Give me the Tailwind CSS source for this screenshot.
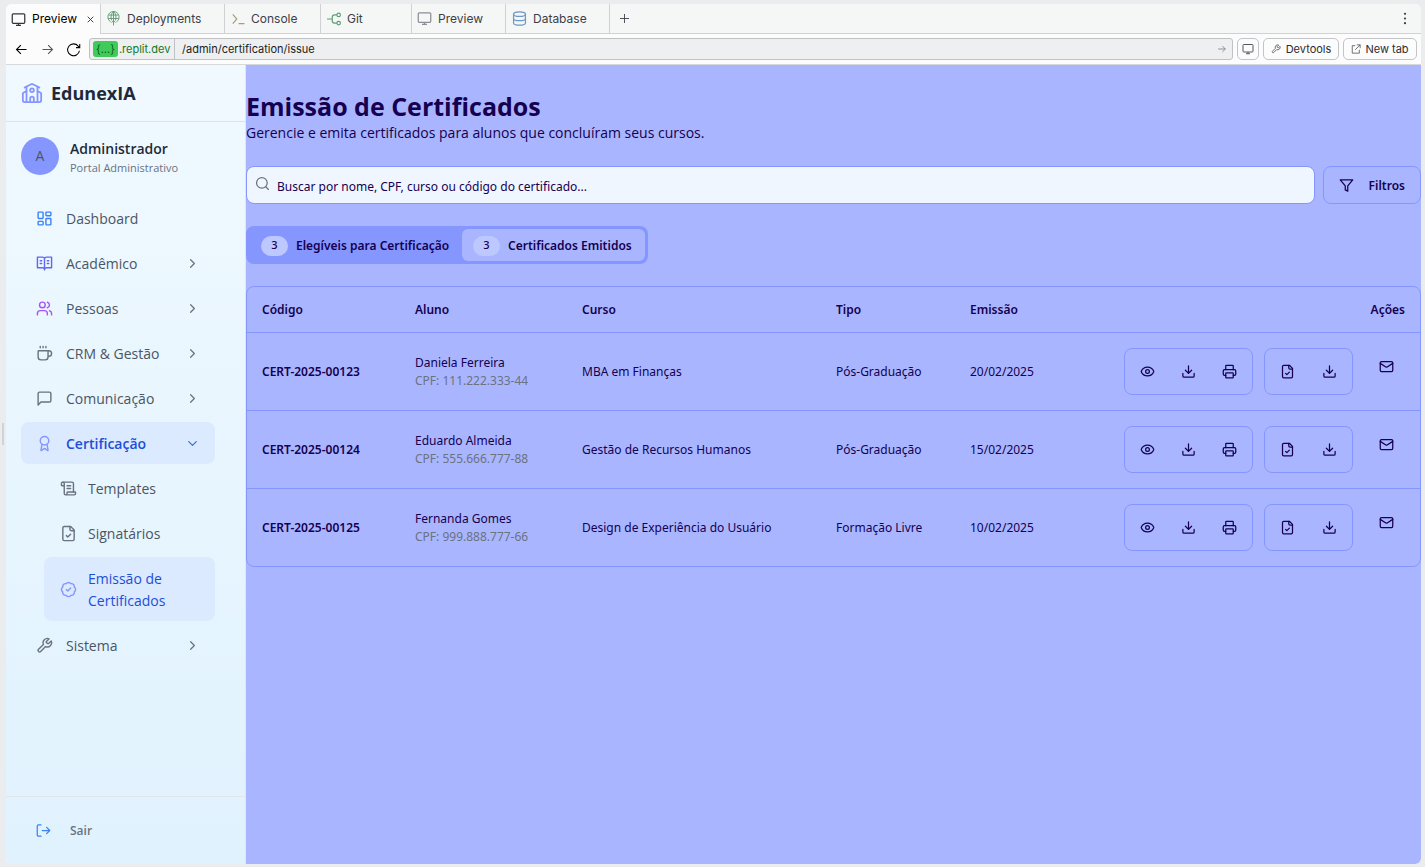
<!DOCTYPE html>
<html lang="pt-BR">
<head>
<meta charset="utf-8">
<title>EdunexIA - Emissão de Certificados</title>
<script src="https://cdn.jsdelivr.net/npm/@tailwindcss/browser@4"></script>
</head>
<body class="h-screen overflow-hidden bg-[#ebecee] pt-1 pr-1 pb-[3px] font-['Open_Sans','Noto_Sans',sans-serif]">
<svg class="hidden" aria-hidden="true">
  <symbol id="monitor" viewBox="0 0 24 24"><rect x="2" y="3" width="20" height="15" rx="1.5"/><path d="M8 21.5h8M12 18v3.5"/></symbol>
  <symbol id="chev" viewBox="0 0 24 24"><path d="m9 18 6-6-6-6"/></symbol>
  <symbol id="download" viewBox="0 0 24 24"><path d="M21 15v4a2 2 0 0 1-2 2H5a2 2 0 0 1-2-2v-4"/><path d="m7 10 5 5 5-5M12 15V3"/></symbol>
  <symbol id="eye" viewBox="0 0 24 24"><path d="M2.06 12.35a1 1 0 0 1 0-.7 10.75 10.75 0 0 1 19.88 0 1 1 0 0 1 0 .7 10.75 10.75 0 0 1-19.88 0"/><circle cx="12" cy="12" r="3"/></symbol>
  <symbol id="printer" viewBox="0 0 24 24"><path d="M6 18H4a2 2 0 0 1-2-2v-5a2 2 0 0 1 2-2h16a2 2 0 0 1 2 2v5a2 2 0 0 1-2 2h-2"/><path d="M6 9V3a1 1 0 0 1 1-1h10a1 1 0 0 1 1 1v6"/><rect x="6" y="14" width="12" height="8" rx="1"/></symbol>
  <symbol id="filecheck" viewBox="0 0 24 24"><path d="M15 2H6a2 2 0 0 0-2 2v16a2 2 0 0 0 2 2h12a2 2 0 0 0 2-2V7Z"/><path d="M14 2v4a2 2 0 0 0 2 2h4M9 15l2 2 4-4"/></symbol>
  <symbol id="mail" viewBox="0 0 24 24"><rect x="2" y="4" width="20" height="16" rx="2"/><path d="m22 7-8.97 5.7a1.94 1.94 0 0 1-2.06 0L2 7"/></symbol>
  <symbol id="wrench" viewBox="0 0 24 24"><path d="M14.7 6.3a1 1 0 0 0 0 1.4l1.6 1.6a1 1 0 0 0 1.4 0l3.77-3.77a6 6 0 0 1-7.94 7.94l-6.91 6.91a2.12 2.12 0 0 1-3-3l6.91-6.91a6 6 0 0 1 7.94-7.94l-3.76 3.76z"/></symbol>
</svg>

<div class="flex h-full">
  <div class="flex w-[6px] shrink-0 items-center pl-[2px]"><span class="h-[22px] w-[2px] bg-[#d0d2d4]"></span></div>
  <div class="flex min-w-0 flex-1 flex-col overflow-hidden rounded-md bg-[#fcfcfc]">
    <!-- Workspace tabs -->
    <div role="tablist" class="flex h-[30px] shrink-0 border-b border-[#cfd1d3] bg-[#f5f7f6] font-[Inter,sans-serif] text-xs text-[#3d4047]">
      <button role="tab" aria-selected="true" class="-mb-px flex w-[95px] items-center gap-[6px] border-r border-[#cfd1d3] bg-[#fcfcfc] pl-[5px] text-black">
        <svg class="size-[15px] fill-none stroke-[#33363b] stroke-2"><use href="#monitor"/></svg>Preview
        <svg viewBox="0 0 10 10" class="ml-1 size-[7px] fill-none stroke-[#3d4047] [stroke-width:1.400]"><path d="m1 1 8 8M9 1l-8 8"/></svg>
      </button>
      <button role="tab" class="flex w-[124px] items-center gap-[6px] border-r border-[#cfd1d3] pl-[5px]">
        <svg viewBox="0 0 24 24" class="size-[15px] fill-none stroke-[#5f9c74] [stroke-width:1.5]"><path d="M7.500 17.500A9 9 0 1 1 16.500 17.500"/><path d="M4 6.500h16M3.500 12h17M12 1v22M9 18.500l3-3 3 3M9 15c-2-5-1-11 3-14 4 3 5 9 3 14"/></svg>Deployments
      </button>
      <button role="tab" class="flex w-24 items-center gap-[6px] border-r border-[#cfd1d3] pl-[6px]">
        <svg viewBox="0 0 24 24" class="size-[14px] fill-none stroke-[#a39f78] stroke-2"><path d="m3 4 7 8-7 8M13 20h10"/></svg>Console
      </button>
      <button role="tab" class="flex w-[91px] items-center gap-[6px] border-r border-[#cfd1d3] pl-[6px]">
        <svg viewBox="0 0 24 24" class="size-[14px] fill-none stroke-[#5f9c74] stroke-2"><path d="M0 12h9M17 5h-4a4 4 0 0 0-4 4v6a4 4 0 0 0 4 4h4"/><circle cx="20" cy="5" r="3"/><circle cx="20" cy="19" r="3"/></svg>Git
      </button>
      <button role="tab" class="flex w-[94px] items-center gap-[6px] border-r border-[#cfd1d3] pl-[5px]">
        <svg class="size-[15px] fill-none stroke-[#8b8e94] stroke-2"><use href="#monitor"/></svg>Preview
      </button>
      <button role="tab" class="flex w-[104px] items-center gap-[6px] border-r border-[#cfd1d3] pl-[6px]">
        <svg viewBox="0 0 24 24" class="size-[15px] fill-none stroke-[#6d97c4] stroke-2"><ellipse cx="12" cy="5" rx="9.500" ry="3.500"/><path d="M2.500 5v14c0 2 4.500 3.500 9.500 3.500s9.500-1.500 9.500-3.500V5M2.500 12c0 2 4.500 3.500 9.500 3.500s9.500-1.500 9.500-3.500"/></svg>Database
      </button>
      <button aria-label="New pane" class="ml-[10px]"><svg viewBox="0 0 10 10" class="size-[9px] fill-none stroke-current"><path d="M5 0v10M0 5h10"/></svg></button>
      <button aria-label="More options" class="mr-3 ml-auto"><svg viewBox="0 0 8 14" class="h-[13px] w-2 fill-[#3d4047]"><circle cx="4" cy="2" r="1.200"/><circle cx="4" cy="7" r="1.200"/><circle cx="4" cy="12" r="1.200"/></svg></button>
    </div>
    <!-- Address bar -->
    <div class="flex h-[31px] shrink-0 items-center border-b border-[#d6d8da] pr-1 pl-2 font-[Inter,sans-serif] text-[11px] text-[#1c1d20]">
      <button aria-label="Back" class="mr-[11px]"><svg viewBox="0 0 24 24" class="size-[15px] fill-none stroke-black [stroke-width:1.7]"><path d="M20 12H4M11 5l-7 7 7 7"/></svg></button>
      <button aria-label="Forward" class="mr-[11px]"><svg viewBox="0 0 24 24" class="size-[15px] fill-none stroke-[#53565c] [stroke-width:1.7]"><path d="M4 12h16M13 5l7 7-7 7"/></svg></button>
      <button aria-label="Reload" class="mr-2"><svg viewBox="0 0 24 24" class="size-[15px] fill-none stroke-black [stroke-width:1.7]"><path d="M21.500 14A9.500 9.500 0 1 1 19.500 6.500l2.500 2.500M22 3v6h-6"/></svg></button>
      <div class="mr-1 flex h-[22px] flex-1 items-center rounded-[3px] border border-[#bfc1c4] bg-[#eeeff1]">
        <button class="flex h-full w-[85px] items-center border-r border-[#bfc1c4] pl-[3px] text-[11px] text-[#0f7a2c]"><span class="mr-px rounded-[3px] bg-[#3ecb58] px-[3px] leading-4 text-[#0b5c20]">{...}</span>.replit.dev</button>
        <input aria-label="Page path" value="/admin/certification/issue" class="min-w-0 flex-1 px-[7px] text-[11px] outline-none">
        <button aria-label="Go" class="mr-[5px]"><svg viewBox="0 0 24 24" class="size-[10px] fill-none stroke-[#7b7e84] stroke-2"><path d="M3 12h17M13 5l7 7-7 7"/></svg></button>
      </div>
      <button aria-label="Device size" class="mr-1 flex h-[22px] w-[22px] items-center justify-center rounded-[5px] border border-[#c2c4c7]"><svg class="size-3 fill-none stroke-[#55585e] stroke-2"><use href="#monitor"/></svg></button>
      <button class="mr-1 flex h-[22px] w-[76px] items-center justify-center gap-[5px] rounded-[5px] border border-[#c2c4c7] text-[11px] text-[#2b2d33]"><svg class="size-[10px] fill-none stroke-[#55585e] stroke-2"><use href="#wrench"/></svg>Devtools</button>
      <button class="flex h-[22px] w-[74px] items-center justify-center gap-1 rounded-[5px] border border-[#c2c4c7] text-[11px] text-[#2b2d33]"><svg viewBox="0 0 24 24" class="size-[10px] fill-none stroke-[#55585e] stroke-2"><path d="M14 2h8v8M22 2 10 14M10 4H3v18h17v-8"/></svg>New tab</button>
    </div>

    <!-- Application -->
    <div class="flex min-h-0 flex-1">
      <aside class="flex w-60 shrink-0 flex-col border-r border-[#dbe7f3] bg-linear-to-b from-[#f0f9ff] to-[#e0f2fe] text-[#4b5563]">
        <div class="flex h-[57px] shrink-0 items-center gap-2 border-b border-[#dbe4ee] px-[15px]">
          <svg viewBox="0 0 24 24" class="size-[22px] fill-none stroke-[#8596ff] stroke-2 [stroke-linecap:round] [stroke-linejoin:round]"><path d="M14 22v-4a2 2 0 1 0-4 0v4"/><path d="m18 10 3.450 1.720A1 1 0 0 1 22 12.620V20a2 2 0 0 1-2 2H4a2 2 0 0 1-2-2v-7.380a1 1 0 0 1 .550-.900L6 10"/><path d="M18 5v17M6 5v17"/><path d="m4 6 7.100-3.550a2 2 0 0 1 1.800 0L20 6"/><circle cx="12" cy="9" r="2"/></svg>
          <span class="text-lg font-bold text-[#1f2937]">EdunexIA</span>
        </div>
        <div class="flex items-start gap-[11px] px-[15px] pt-[15px] pb-5">
          <span class="flex size-[38px] items-center justify-center rounded-full bg-[#8596ff] text-sm">A</span>
          <div class="flex flex-col pt-[2px]">
            <span class="text-sm leading-5 font-semibold text-[#1f2937]">Administrador</span>
            <span class="text-[11px] leading-[18px] text-[#6b7280]">Portal Administrativo</span>
          </div>
        </div>
        <nav class="flex flex-1 flex-col gap-[3px] pr-[30px] pl-[15px] text-sm [&_svg]:shrink-0 [&_svg]:fill-none [&_svg]:stroke-2 [&_svg]:[stroke-linecap:round] [&_svg]:[stroke-linejoin:round] [&_svg:first-child]:size-[17px] [&_span+svg]:size-[15px]">
          <a href="#" class="flex h-[42px] shrink-0 items-center gap-[13px] px-[15px] pt-px"><svg viewBox="0 0 24 24" class="stroke-[#3b82f6]"><rect x="3" y="3" width="7" height="9" rx="1"/><rect x="14" y="3" width="7" height="5" rx="1"/><rect x="14" y="12" width="7" height="9" rx="1"/><rect x="3" y="16" width="7" height="5" rx="1"/></svg>Dashboard</a>
          <button class="flex h-[42px] shrink-0 items-center gap-[13px] px-[15px] text-left"><svg viewBox="0 0 24 24" class="stroke-[#6366f1]"><path d="M12 21V5M2 3h7a3 3 0 0 1 3 2 3 3 0 0 1 3-2h7v15h-7a3 3 0 0 0-3 2 3 3 0 0 0-3-2H2zM6 8h2M6 12h2M16 8h2M16 12h2"/></svg><span class="flex-1 pt-px">Acadêmico</span><svg class="stroke-[#6b7280]"><use href="#chev"/></svg></button>
          <button class="flex h-[42px] shrink-0 items-center gap-[13px] px-[15px] text-left"><svg viewBox="0 0 24 24" class="stroke-[#a855f7]"><path d="M16 21v-2a4 4 0 0 0-4-4H6a4 4 0 0 0-4 4v2M22 21v-2a4 4 0 0 0-3-3.870M16 3.130a4 4 0 0 1 0 7.750"/><circle cx="9" cy="7" r="4"/></svg><span class="flex-1 pt-px">Pessoas</span><svg class="stroke-[#6b7280]"><use href="#chev"/></svg></button>
          <button class="flex h-[42px] shrink-0 items-center gap-[13px] px-[15px] text-left"><svg viewBox="0 0 24 24" class="stroke-[#6b7280]"><path d="M10 2v2M14 2v2M6 2v2M16 8a1 1 0 0 1 1 1v8a4 4 0 0 1-4 4H7a4 4 0 0 1-4-4V9a1 1 0 0 1 1-1h14a4 4 0 1 1 0 8h-1"/></svg><span class="flex-1 pt-px">CRM &amp; Gestão</span><svg class="stroke-[#6b7280]"><use href="#chev"/></svg></button>
          <button class="flex h-[42px] shrink-0 items-center gap-[13px] px-[15px] text-left"><svg viewBox="0 0 24 24" class="stroke-[#6b7280]"><path d="M21 15a2 2 0 0 1-2 2H7l-4 4V5a2 2 0 0 1 2-2h14a2 2 0 0 1 2 2z"/></svg><span class="flex-1 pt-px">Comunicação</span><svg class="stroke-[#6b7280]"><use href="#chev"/></svg></button>
          <button aria-expanded="true" class="flex h-[42px] shrink-0 items-center gap-[13px] rounded-lg bg-[#dbeafe] px-[15px] text-left font-semibold text-[#1d4ed8]"><svg viewBox="0 0 24 24" class="stroke-[#8596ff]"><circle cx="12" cy="8" r="6"/><path d="m15.480 12.890 1.510 8.530a.5.5 0 0 1-.810.470l-3.580-2.690a1 1 0 0 0-1.200 0l-3.580 2.690a.5.5 0 0 1-.810-.470l1.510-8.530"/></svg><span class="flex-1 pt-px">Certificação</span><svg class="rotate-90 stroke-[#3b6ee0]"><use href="#chev"/></svg></button>
          <div class="flex flex-col gap-[3px] pl-[23px]">
            <a href="#" class="flex h-[42px] items-center gap-[11px] px-4 pt-px"><svg viewBox="0 0 24 24" class="stroke-[#6b7280]"><path d="M15 12h-5M15 8h-5M19 17V5a2 2 0 0 0-2-2H4"/><path d="M8 21h12a2 2 0 0 0 2-2v-1a1 1 0 0 0-1-1H11a1 1 0 0 0-1 1v1a2 2 0 1 1-4 0V5a2 2 0 1 0-4 0v2a1 1 0 0 0 1 1h3"/></svg>Templates</a>
            <a href="#" class="flex h-[42px] items-center gap-[11px] px-4 pt-px"><svg class="stroke-[#6b7280]"><use href="#filecheck"/></svg>Signatários</a>
            <a href="#" aria-current="page" class="flex h-16 items-center gap-[11px] rounded-lg bg-[#dbeafe] px-4 pt-px leading-[22px] text-[#1d4ed8]"><svg viewBox="0 0 24 24" class="stroke-[#8596ff]"><path d="M3.850 8.620a4 4 0 0 1 4.780-4.770 4 4 0 0 1 6.740 0 4 4 0 0 1 4.780 4.780 4 4 0 0 1 0 6.740 4 4 0 0 1-4.770 4.780 4 4 0 0 1-6.750 0 4 4 0 0 1-4.780-4.770 4 4 0 0 1 0-6.760Z"/><path d="m9 12 2 2 4-4"/></svg>Emissão de Certificados</a>
          </div>
          <button class="flex h-[42px] shrink-0 items-center gap-[13px] px-[15px] text-left"><svg class="stroke-[#6b7280]"><use href="#wrench"/></svg><span class="flex-1 pt-px">Sistema</span><svg class="stroke-[#6b7280]"><use href="#chev"/></svg></button>
        </nav>
        <div class="flex h-[68px] shrink-0 items-center border-t border-[#e0e5ea] px-[30px]">
          <button class="flex items-center gap-[19px] text-xs font-semibold text-[#6b7280]"><svg viewBox="0 0 24 24" class="size-[15px] fill-none stroke-[#3b82f6] stroke-2 [stroke-linecap:round] [stroke-linejoin:round]"><path d="M8 21H4a2 2 0 0 1-2-2V5a2 2 0 0 1 2-2h4M17 17l5-5-5-5M22 12H10"/></svg>Sair</button>
        </div>
      </aside>

      <main class="min-w-0 flex-1 bg-[#a9b6ff] pt-6 font-['Noto_Sans','Open_Sans',sans-serif] text-xs text-[#16004f]">
        <h1 class="font-['Open_Sans','Noto_Sans',sans-serif] text-[25px] leading-[34px] font-bold">Emissão de Certificados</h1>
        <p class="font-['Open_Sans','Noto_Sans',sans-serif] text-sm leading-5">Gerencie e emita certificados para alunos que concluíram seus cursos.</p>
        <div class="mt-[23px] flex gap-2">
          <label class="flex h-[38px] flex-1 items-center gap-[7px] rounded-lg border border-[#8596ff] bg-[#eff6ff] px-2">
            <svg viewBox="0 0 24 24" class="mb-1 size-[15px] fill-none stroke-[#6b7280] stroke-2 [stroke-linecap:round]"><circle cx="11" cy="11" r="8.500"/><path d="m21.500 21.500-4.300-4.300"/></svg>
            <input type="text" aria-label="Buscar certificados" placeholder="Buscar por nome, CPF, curso ou código do certificado..." class="min-w-0 flex-1 pt-[3px] outline-none placeholder:text-[#16004f]">
          </label>
          <button class="flex h-[38px] w-[98px] items-center justify-between rounded-lg border border-[#8596ff] px-[15px] pt-px font-semibold"><svg viewBox="0 0 24 24" class="size-[15px] fill-none stroke-current stroke-2 [stroke-linejoin:round]"><path d="M22 3H2l8 9.460V19l4 2v-8.540z"/></svg>Filtros</button>
        </div>
        <div role="tablist" class="mt-[22px] flex h-[38px] w-[402px] rounded-lg bg-[#8596ff] p-[3px] font-semibold">
          <button role="tab" class="flex flex-1 items-center gap-2 pt-px pl-3 whitespace-nowrap"><span class="flex h-5 w-[27px] items-center justify-center rounded-full bg-[#bdc8ff] text-[11px] font-medium">3</span>Elegíveis para Certificação</button>
          <button role="tab" aria-selected="true" class="flex w-[183px] items-center gap-2 rounded-md bg-[#a9b6ff] pt-px pl-[11px] whitespace-nowrap"><span class="flex h-5 w-[27px] items-center justify-center rounded-full bg-[#bdc8ff] text-[11px] font-medium">3</span>Certificados Emitidos</button>
        </div>
        <div class="mt-[22px] rounded-lg border border-[#8596ff]">
          <table class="w-full table-fixed text-left [&_svg]:size-[15px] [&_svg]:fill-none [&_svg]:stroke-current [&_svg]:stroke-2 [&_svg]:[stroke-linecap:round] [&_svg]:[stroke-linejoin:round]">
            <thead>
              <tr class="h-[45px] border-b border-[#8596ff] [&>th]:px-[15px] [&>th]:pt-[2px] [&>th]:font-semibold">
                <th class="w-[153px]">Código</th><th class="w-[167px]">Aluno</th><th class="w-[254px]">Curso</th><th class="w-[134px]">Tipo</th><th class="w-[134px]">Emissão</th><th class="text-right">Ações</th>
              </tr>
            </thead>
            <tbody id="rows" class="[&>tr:last-child]:border-b-0"></tbody>
          </table>
        </div>
      </main>
    </div>
  </div>
</div>

<script>
const certificates = [
  ["CERT-2025-00123", "Daniela Ferreira", "111.222.333-44", "MBA em Finanças", "Pós-Graduação", "20/02/2025"],
  ["CERT-2025-00124", "Eduardo Almeida", "555.666.777-88", "Gestão de Recursos Humanos", "Pós-Graduação", "15/02/2025"],
  ["CERT-2025-00125", "Fernanda Gomes", "999.888.777-66", "Design de Experiência do Usuário", "Formação Livre", "10/02/2025"]
];
const action = (icon, label) => `<button aria-label="${label}" class="flex size-[37px] items-center justify-center"><svg><use href="#${icon}"/></svg></button>`;
document.getElementById("rows").innerHTML = certificates.map(([code, student, cpf, course, type, date]) => `
  <tr class="h-[78px] border-b border-[#8596ff] [&>td]:px-[15px] [&>td:not(:last-child)]:pt-[2px]">
    <td class="font-semibold">${code}</td>
    <td class="leading-[18px]"><div>${student}</div><div class="text-[#6b7280]">CPF: ${cpf}</div></td>
    <td>${course}</td><td>${type}</td><td>${date}</td>
    <td><div class="flex items-start justify-end">
      <div class="mr-[11px] flex gap-1 rounded-lg border border-[#8596ff] p-1">${action("eye", "Visualizar")}${action("download", "Baixar")}${action("printer", "Imprimir")}</div>
      <div class="mr-[15px] flex gap-[5px] rounded-lg border border-[#8596ff] p-1">${action("filecheck", "Histórico")}${action("download", "Baixar histórico")}</div>
      ${action("mail", "Enviar por e-mail")}
    </div></td>
  </tr>`).join("");
</script>
</body>
</html>
